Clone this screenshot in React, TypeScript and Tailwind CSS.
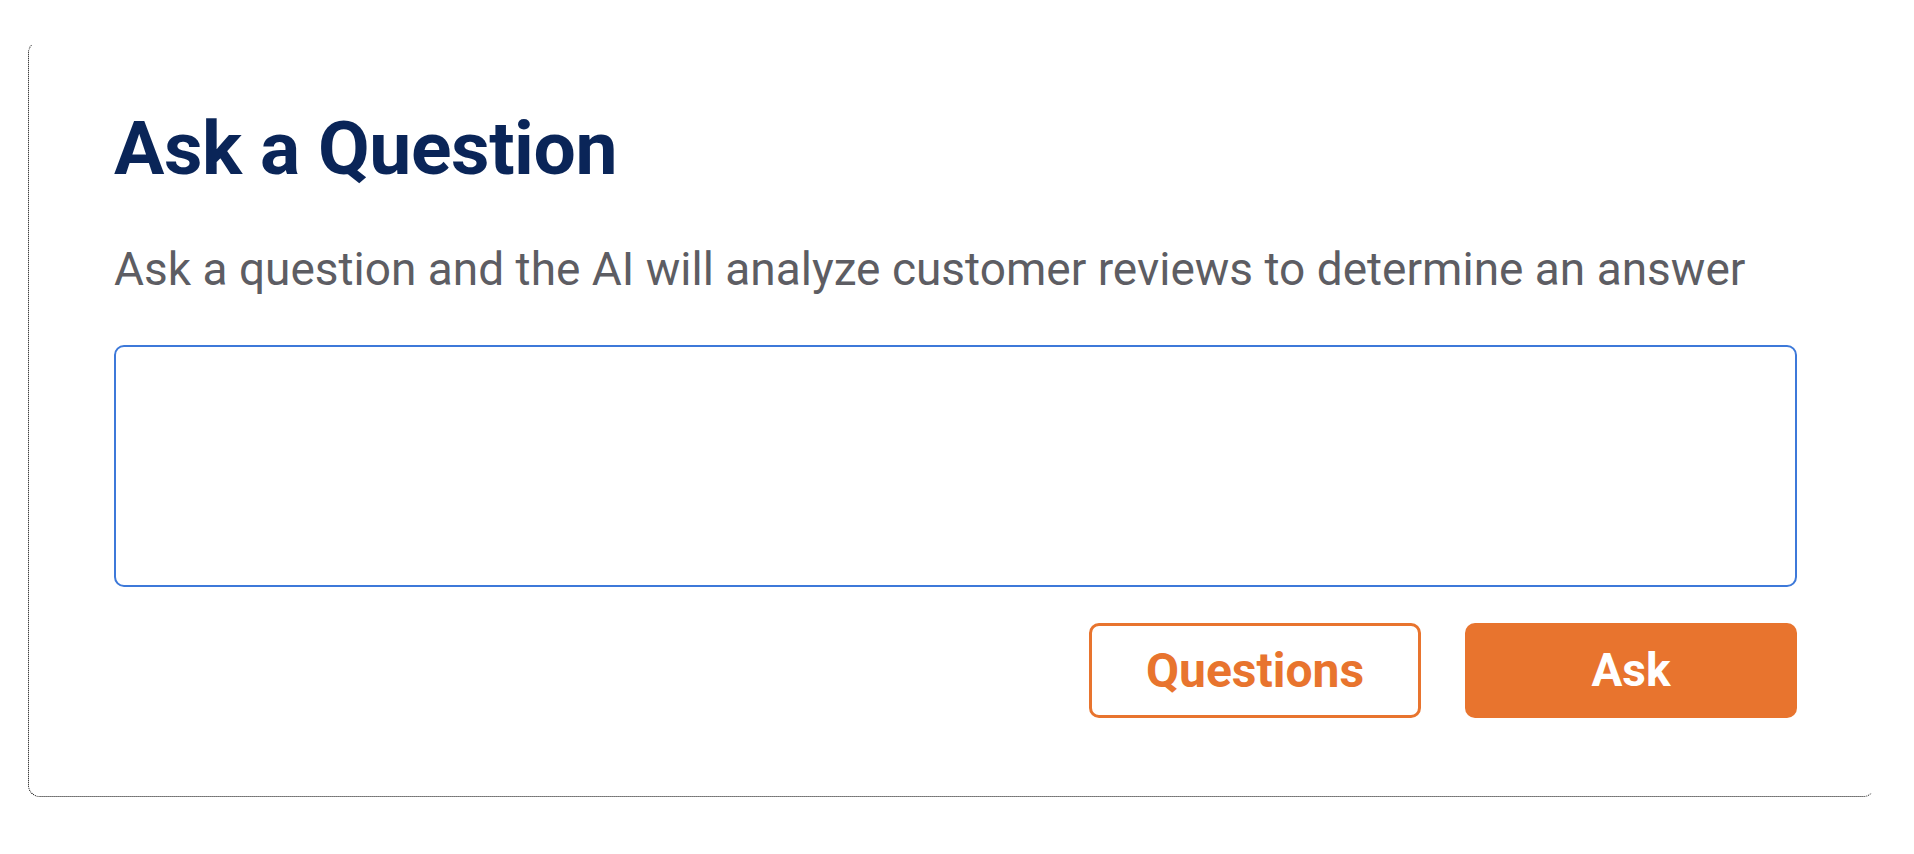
export default function App() {
  return (
    <div className="min-h-screen bg-white font-['Roboto',sans-serif] pl-[28px] pt-[41px]">
      <div className="w-[1847px] h-[756px] rounded-xl border border-dotted border-black border-t-white border-r-white pl-[85px] pr-[77px] pt-[61px]">
        <h1 className="text-[75px] leading-[91px] font-bold text-[#0a2558] tracking-[-0.4px]">Ask a Question</h1>
        <p className="mt-[44px] text-[46px] leading-[63px] text-[#5d5d63]">
          Ask a question and the AI will analyze customer reviews to determine an answer
        </p>
        <textarea className="mt-[44px] block w-full h-[242px] rounded-[10px] border-2 border-[#3d79d9] outline-none resize-none p-4 text-[40px]" />
        <div className="mt-[36px] flex justify-end gap-[44px]">
          <button className="w-[332px] h-[95px] rounded-[10px] border-[3px] border-[#e8742e] bg-white text-[#e8742e] text-[48px] font-bold">
            Questions
          </button>
          <button className="w-[332px] h-[95px] rounded-[10px] bg-[#e8742e] text-white text-[46px] font-bold">
            Ask
          </button>
        </div>
      </div>
    </div>
  )
}
